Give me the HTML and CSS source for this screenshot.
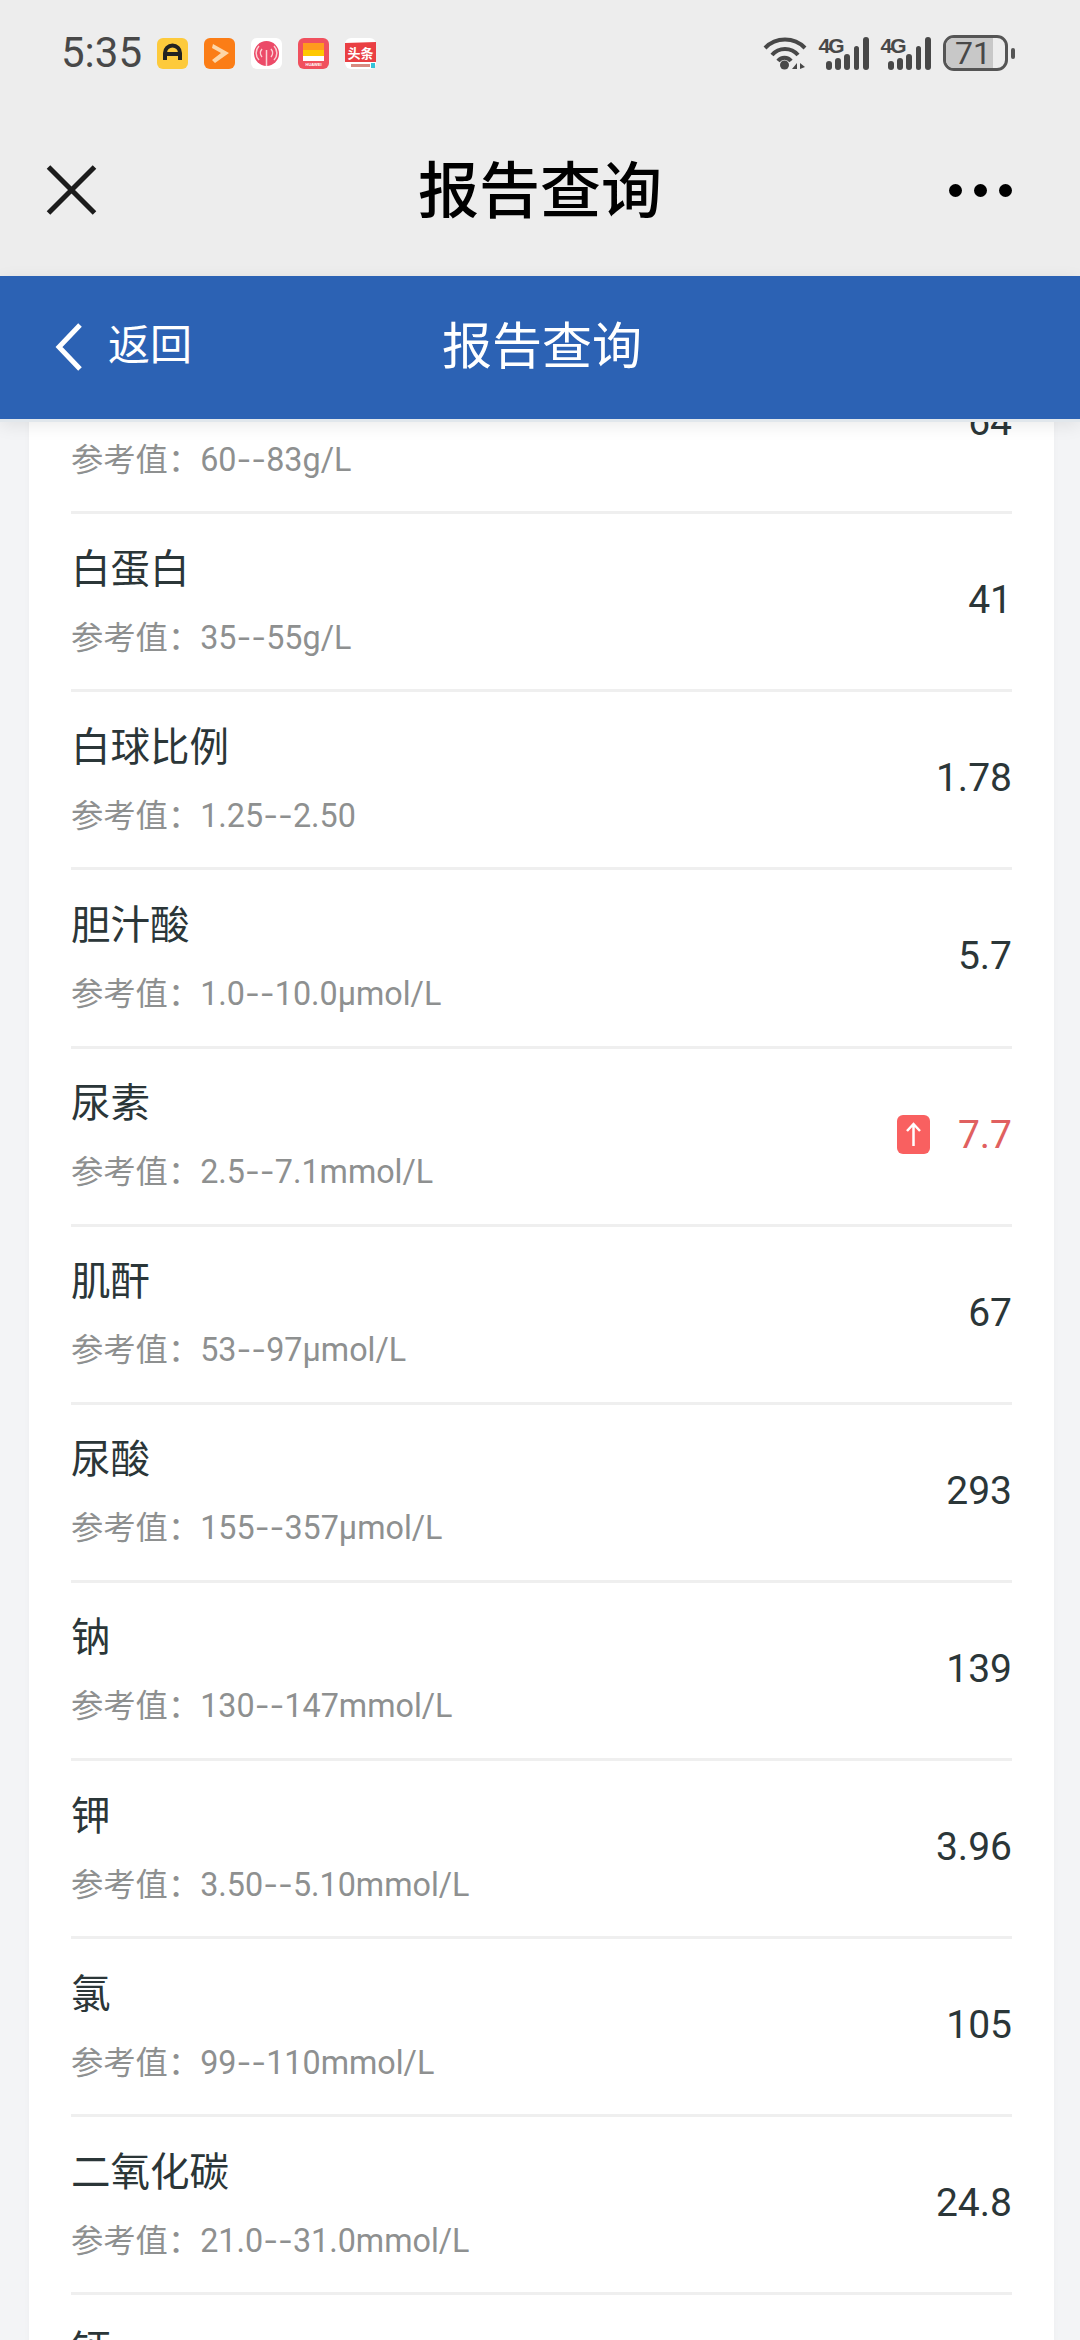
FILE: index.html
```html
<!DOCTYPE html>
<html lang="zh-CN">
<head>
    <meta charset="UTF-8">
    <meta name="viewport" content="width=device-width, initial-scale=1.0">
    <title>报告查询</title>
    <link rel="stylesheet" href="styles.css">
</head>
<body>
<div class="top-area">
    <div class="status-bar">
        <div class="status-left">
            <span class="time">5:35</span>
            <div class="app-icons">
                <svg class="app-icon" viewBox="0 0 31 31">
                    <rect width="31" height="31" rx="6" fill="#fdca3c"/>
                    <path d="M8 22V15a7.500 7.500 0 0 1 15 0v7M8 16h15" fill="none" stroke="#222" stroke-width="4"/>
                </svg>
                <svg class="app-icon" viewBox="0 0 31 31">
                    <rect width="31" height="31" rx="6" fill="#fb7d16"/>
                    <path d="M9 6l16 9-14 10-3-3 9-7-9-5z" fill="#fdd6a8"/>
                </svg>
                <svg class="app-icon" viewBox="0 0 31 31">
                    <rect width="31" height="31" rx="6" fill="#fff"/>
                    <circle cx="15.500" cy="15.500" r="12.500" fill="#ec4a68"/>
                    <path d="M15.500 12v16M11 19a6 6 0 0 1 0-8M20 11a6 6 0 0 1 0 8M8 22a10 10 0 0 1 0-14M23 8a10 10 0 0 1 0 14" fill="none" stroke="#fbd0d4" stroke-width="1.500"/>
                </svg>
                <svg class="app-icon" viewBox="0 0 31 31">
                    <rect width="31" height="31" rx="6" fill="#f0505e"/>
                    <rect x="5" y="5" width="21" height="7" fill="#ff9a1e"/>
                    <rect x="5" y="12" width="21" height="6" fill="#ffc800"/>
                    <rect x="5" y="18" width="21" height="5" fill="#fff"/>
                    <text x="15.500" y="28" class="huawei-text">HUAWEI</text>
                </svg>
                <svg class="app-icon" viewBox="0 0 31 31">
                    <rect width="31" height="31" rx="6" fill="#fff"/>
                    <path d="M0 5l31-1v20H0z" fill="#ea3f43"/>
                    <text x="15.500" y="20" class="toutiao-text">头条</text>
                    <rect x="6" y="26" width="19" height="3" fill="#d88a80"/>
                    <rect x="26" y="25" width="4" height="5" fill="#35c3d8"/>
                </svg>
            </div>
        </div>
        <div class="status-right">
            <svg class="wifi" viewBox="0 0 44 34">
                <path d="M2 12a28 28 0 0 1 40 0M9 19a17 17 0 0 1 26 0" fill="none" stroke="#484848" stroke-width="4"/>
                <path d="M15 25a8 8 0 0 1 13 0" fill="none" stroke="#484848" stroke-width="4"/>
                <circle cx="21.500" cy="29" r="4.500" fill="#484848"/>
                <path d="M29 33l5-6v6zM37 27l5 4-5 2z" fill="#484848"/>
            </svg>
            <div class="signal">
                <span class="net-type">4G</span>
                <div class="bars">
                    <i class="bar b1"></i><i class="bar b2"></i><i class="bar b3"></i><i class="bar b4"></i><i class="bar b5"></i>
                </div>
            </div>
            <div class="signal">
                <span class="net-type">4G</span>
                <div class="bars">
                    <i class="bar b1"></i><i class="bar b2"></i><i class="bar b3"></i><i class="bar b4"></i><i class="bar b5"></i>
                </div>
            </div>
            <div class="battery">
                <div class="battery-body">
                    <div class="battery-fill"></div>
                    <span class="battery-num">71</span>
                </div>
                <div class="battery-nub"></div>
            </div>
        </div>
    </div>
    <div class="nav-bar">
        <div class="nav-side">
            <svg class="close-icon" viewBox="0 0 50 50">
                <path d="M2 2l46 46M48 2L2 48" fill="none" stroke="#1c1c1c" stroke-width="5"/>
            </svg>
        </div>
        <h1 class="nav-title">报告查询</h1>
        <div class="nav-side more">
            <i class="dot"></i><i class="dot"></i><i class="dot"></i>
        </div>
    </div>
</div>

<div class="header">
    <div class="back">
        <svg class="back-icon" viewBox="0 0 29 50">
            <path d="M26 3L5 25l21 22" fill="none" stroke="#fff" stroke-width="5"/>
        </svg>
        <span class="back-text">返回</span>
    </div>
    <h2 class="header-title">报告查询</h2>
    <div class="header-side"></div>
</div>

<div class="list-view">
    <div class="card">
        <div class="row">
            <div class="row-info">
                <div class="item-name">总蛋白</div>
                <div class="item-ref">参考值：60<span class="dash">--</span>83g/L</div>
            </div>
            <div class="item-value">64</div>
        </div>
        <div class="row">
            <div class="row-info">
                <div class="item-name">白蛋白</div>
                <div class="item-ref">参考值：35<span class="dash">--</span>55g/L</div>
            </div>
            <div class="item-value">41</div>
        </div>
        <div class="row">
            <div class="row-info">
                <div class="item-name">白球比例</div>
                <div class="item-ref">参考值：1.25<span class="dash">--</span>2.50</div>
            </div>
            <div class="item-value">1.78</div>
        </div>
        <div class="row">
            <div class="row-info">
                <div class="item-name">胆汁酸</div>
                <div class="item-ref">参考值：1.0<span class="dash">--</span>10.0μmol/L</div>
            </div>
            <div class="item-value">5.7</div>
        </div>
        <div class="row">
            <div class="row-info">
                <div class="item-name">尿素</div>
                <div class="item-ref">参考值：2.5<span class="dash">--</span>7.1mmol/L</div>
            </div>
            <div class="item-value high">
                <span class="up-badge">
                    <svg class="up-arrow" viewBox="0 0 17 25">
                        <path d="M8.500 24V2M2 9l6.500-7L15 9" fill="none" stroke="#fff" stroke-width="2.500"/>
                    </svg>
                </span>
                7.7
            </div>
        </div>
        <div class="row">
            <div class="row-info">
                <div class="item-name">肌酐</div>
                <div class="item-ref">参考值：53<span class="dash">--</span>97μmol/L</div>
            </div>
            <div class="item-value">67</div>
        </div>
        <div class="row">
            <div class="row-info">
                <div class="item-name">尿酸</div>
                <div class="item-ref">参考值：155<span class="dash">--</span>357μmol/L</div>
            </div>
            <div class="item-value">293</div>
        </div>
        <div class="row">
            <div class="row-info">
                <div class="item-name">钠</div>
                <div class="item-ref">参考值：130<span class="dash">--</span>147mmol/L</div>
            </div>
            <div class="item-value">139</div>
        </div>
        <div class="row">
            <div class="row-info">
                <div class="item-name">钾</div>
                <div class="item-ref">参考值：3.50<span class="dash">--</span>5.10mmol/L</div>
            </div>
            <div class="item-value">3.96</div>
        </div>
        <div class="row">
            <div class="row-info">
                <div class="item-name">氯</div>
                <div class="item-ref">参考值：99<span class="dash">--</span>110mmol/L</div>
            </div>
            <div class="item-value">105</div>
        </div>
        <div class="row">
            <div class="row-info">
                <div class="item-name">二氧化碳</div>
                <div class="item-ref">参考值：21.0<span class="dash">--</span>31.0mmol/L</div>
            </div>
            <div class="item-value">24.8</div>
        </div>
        <div class="row">
            <div class="row-info">
                <div class="item-name">钙</div>
            </div>
        </div>
    </div>
</div>
</body>
</html>
```

FILE: styles.css
```css
* {
    box-sizing: border-box;
}

html, body {
    height: 2340px;
    overflow: hidden;
}

body {
    margin: 0;
    background-color: #f3f4f6;
    font-family: Roboto, "Noto Sans CJK SC", sans-serif;
    color: #2b3638;
}

/* system area */
.top-area {
    background-color: #ededed;
    height: 276px;
}

.status-bar {
    display: flex;
    justify-content: space-between;
    align-items: center;
    height: 104px;
    padding: 2px 65px 0 61px;
}

.status-left {
    display: flex;
    align-items: center;
    gap: 15px;
}

.time {
    font-size: 42px;
    line-height: 48px;
    color: #484848;
}

.app-icons {
    display: flex;
    gap: 16px;
}

.app-icon {
    width: 31px;
    height: 31px;
    display: block;
}

.huawei-text {
    font-family: "Liberation Sans", sans-serif;
    font-size: 4px;
    font-weight: 700;
    fill: #fff;
    text-anchor: middle;
}

.toutiao-text {
    font-family: "Noto Sans CJK SC", sans-serif;
    font-size: 13px;
    font-weight: 700;
    fill: #fff;
    text-anchor: middle;
}

.status-right {
    display: flex;
    align-items: center;
    gap: 12px;
}

.wifi {
    width: 44px;
    height: 34px;
    display: block;
}

.signal {
    position: relative;
    width: 50px;
    height: 34px;
}

.net-type {
    position: absolute;
    left: 0;
    top: -2px;
    font-family: "Liberation Sans", sans-serif;
    font-size: 21px;
    line-height: 24px;
    font-weight: 700;
    letter-spacing: -2px;
    color: #484848;
}

.bars {
    display: flex;
    justify-content: flex-end;
    align-items: flex-end;
    gap: 3.500px;
    height: 34px;
}

.bar {
    width: 5.700px;
    background-color: #484848;
    border-radius: 3px;
}

.b1 { height: 9px; }
.b2 { height: 12px; }
.b3 { height: 16px; }
.b4 { height: 24px; }
.b5 { height: 33px; }

.battery {
    display: flex;
    align-items: center;
    gap: 3px;
}

.battery-body {
    position: relative;
    width: 65px;
    height: 36px;
    border: 3px solid #555;
    border-radius: 11px;
    overflow: hidden;
    text-align: center;
}

.battery-fill {
    position: absolute;
    left: 0;
    top: 0;
    bottom: 0;
    width: 47px;
    background-color: #c8c8c8;
}

.battery-num {
    position: relative;
    display: block;
    margin-right: 4px;
    font-size: 32px;
    line-height: 30px;
    color: #484848;
}

.battery-nub {
    width: 4.500px;
    height: 11px;
    background-color: #555;
    border-radius: 2px;
}

.nav-bar {
    display: flex;
    justify-content: space-between;
    align-items: center;
    height: 172px;
    padding: 0 46px;
}

.nav-side {
    width: 150px;
}

.close-icon {
    width: 51px;
    height: 50px;
    display: block;
}

.nav-title {
    margin: 0;
    padding-bottom: 6px;
    font-size: 61px;
    line-height: 80px;
    font-weight: 500;
    color: #000;
    font-family: "Noto Sans CJK SC", sans-serif;
}

.more {
    display: flex;
    justify-content: flex-end;
    gap: 12px;
    padding-right: 22px;
}

.dot {
    width: 13px;
    height: 13px;
    border-radius: 50%;
    background-color: #000;
}

/* blue page header */
.header {
    position: relative;
    z-index: 2;
    display: flex;
    justify-content: space-between;
    align-items: center;
    height: 146px;
    padding: 0 54px 2px;
    background-color: #2c62b4;
    border-bottom: 3px solid #e1e7ec;
    box-shadow: 0 4px 16px rgba(0, 0, 0, 0.08);
    color: #fff;
}

.back {
    display: flex;
    align-items: center;
    gap: 25px;
    width: 200px;
    font-size: 42px;
    font-family: "Noto Sans CJK SC", sans-serif;
}

.back-icon {
    width: 29px;
    height: 50px;
    display: block;
}

.back-text {
    padding-bottom: 10px;
}

.header-title {
    margin: 0;
    padding-bottom: 10px;
    font-size: 50px;
    line-height: 70px;
    font-weight: 400;
    font-family: "Noto Sans CJK SC", sans-serif;
}

.header-side {
    width: 196px;
}

/* result list, scrolled so the first row sits under the header */
.list-view {
    height: 1918px;
    overflow: hidden;
}

.card {
    width: 1025px;
    margin: -86px 0 0 29px;
    padding: 0 42px;
    background-color: #fff;
    box-shadow: 0 0 6px rgba(0, 0, 0, 0.03);
}

.row {
    display: flex;
    justify-content: space-between;
    align-items: center;
    padding: 20.570px 0;
    border-bottom: 3px solid #efefef;
}

.item-name {
    font-family: "Noto Sans CJK SC", sans-serif;
    font-size: 39.500px;
    line-height: 61px;
    color: #2b3638;
}

.item-ref {
    margin-top: 12px;
    font-size: 32.300px;
    line-height: 61px;
    color: #8e9090;
}

.dash {
    font-family: Inter, sans-serif;
    line-height: 0;
}

.item-value {
    display: flex;
    align-items: center;
    gap: 28px;
    padding-bottom: 3px;
    font-size: 39px;
    line-height: 50px;
    color: #2b3638;
}

.item-value.high {
    color: #e06060;
}

.up-badge {
    display: flex;
    justify-content: center;
    align-items: center;
    width: 33px;
    height: 39px;
    border-radius: 6px;
    background-color: #f96060;
}

.up-arrow {
    width: 17px;
    height: 25px;
    display: block;
}
```
